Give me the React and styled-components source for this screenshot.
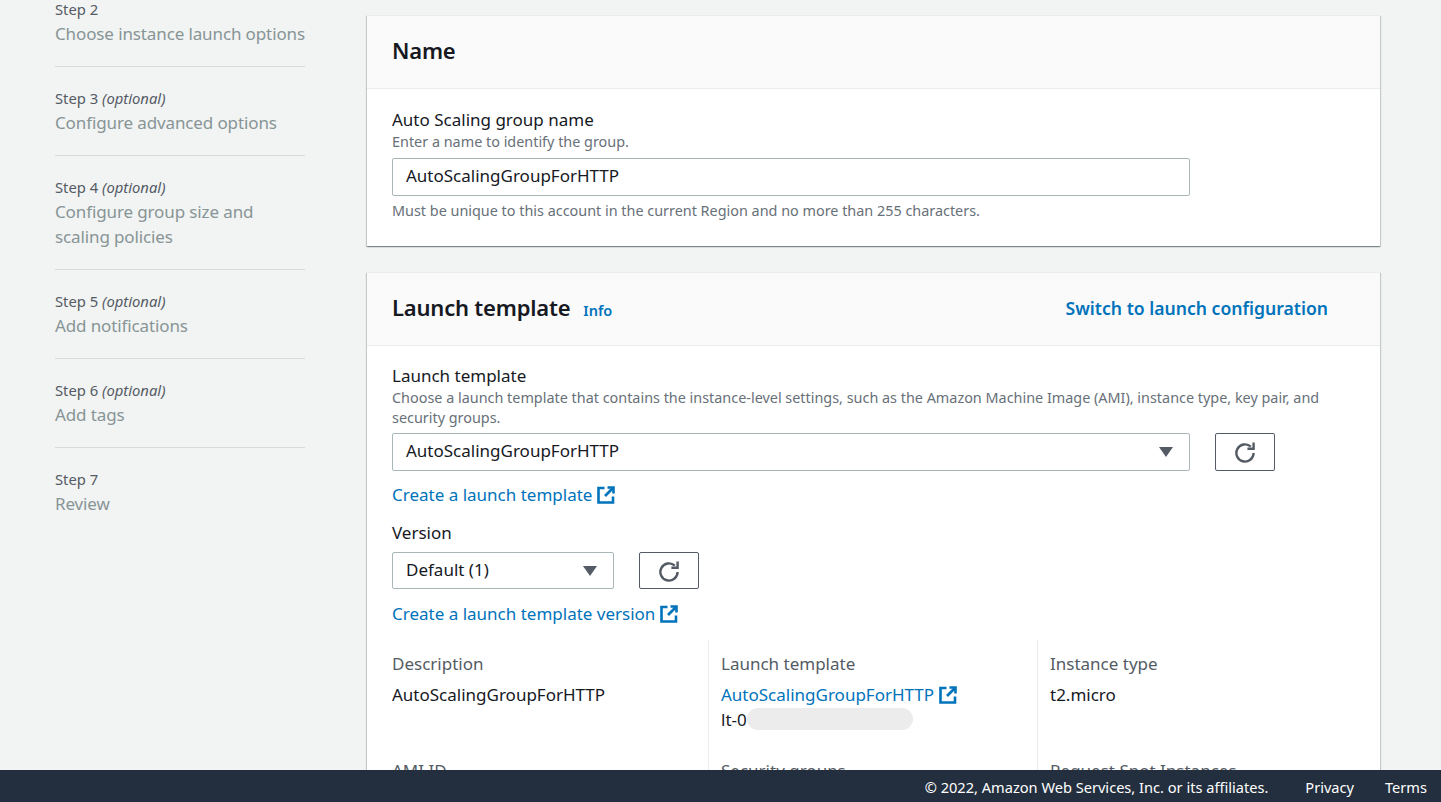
import React from 'react';
import styled, { createGlobalStyle } from 'styled-components';

const Global = createGlobalStyle`
  html, body { margin: 0; padding: 0; height: 100%; overflow: hidden; background: #f2f3f3; }
  body { font-family: "Noto Sans", "Open Sans", sans-serif; color: #16191f; }
  * { box-sizing: border-box; }
`;

const Page = styled.div`
  height: 802px;
  display: flex;
  flex-direction: column;
  overflow: hidden;
`;
const Main = styled.main`
  flex: 1;
  min-height: 0;
  overflow: hidden;
  display: grid;
  grid-template-columns: 250px 1013px;
  column-gap: 62px;
  padding-left: 55px;
  align-items: start;
`;
const Sidebar = styled.ol`
  list-style: none;
  margin: -1px 0 0;
  padding: 0;
`;
const Step = styled.li`
  padding: ${p => (p.$first ? '0' : '21px')} 0 19.5px;
  border-bottom: ${p => (p.$last ? 'none' : '1px solid #d5dbdb')};
`;
const StepLabel = styled.div`
  font-size: 14.8px;
  line-height: 20px;
  color: #545b64;
  em { font-style: italic; }
`;
const StepTitle = styled.div`
  margin-top: 3px;
  font-size: 17px;
  line-height: 24.5px;
  color: #879596;
  letter-spacing: -0.12px;
  white-space: nowrap;
`;
const Content = styled.div`
  padding-top: 15px;
  display: flex;
  flex-direction: column;
  gap: 26px;
`;
const Card = styled.section`
  background: #fff;
  border-top: 1px solid #eaeded;
  box-shadow: 0 1px 1px 0 rgba(0, 28, 36, 0.3), 1px 1px 1px 0 rgba(0, 28, 36, 0.15), -1px 1px 1px 0 rgba(0, 28, 36, 0.15);
`;
const CardHeader = styled.header`
  height: 73px;
  background: #fafafa;
  border-bottom: 1px solid #eaeded;
  padding: 0 52px 2px 25px;
  display: flex;
  align-items: center;
`;
const CardTitle = styled.h2`
  margin: 0 0 2px;
  font-size: 22px;
  line-height: 28px;
  font-weight: 600;
  letter-spacing: -0.2px;
  color: #16191f;
`;
const InfoLink = styled.a`
  margin-left: 13px;
  margin-top: 3px;
  font-size: 14.5px;
  font-weight: 600;
  color: #0073bb;
`;
const SwitchLink = styled.a`
  margin-left: auto;
  margin-top: -1px;
  font-size: 17.6px;
  font-weight: 600;
  color: #0073bb;
`;
const CardBody = styled.div`
  padding: ${p => (p.$flush ? '19px 25px 0' : '20px 25px 25px')};
`;
const Label = styled.div`
  font-size: 17px;
  line-height: 22px;
  color: #16191f;
  margin-top: ${p => p.$top || 0}px;
`;
const Description = styled.div`
  margin-top: 1px;
  font-size: 14.4px;
  line-height: 20px;
  color: #687078;
`;
const Hint = styled(Description)`
  margin-top: 5px;
`;
const TextInput = styled.input`
  display: block;
  width: 798px;
  height: 38px;
  margin-top: 6px;
  padding: 0 13px 3px;
  font: inherit;
  font-size: 17px;
  color: #16191f;
  background: #fff;
  border: 1px solid #aab7b8;
  border-radius: 2px;
  outline: none;
`;
const ControlRow = styled.div`
  display: flex;
  align-items: stretch;
  gap: 25px;
  margin-top: ${p => p.$top}px;
  height: ${p => p.$h}px;
`;
const SelectBox = styled.div`
  width: ${p => p.$w}px;
  display: flex;
  align-items: center;
  justify-content: space-between;
  padding: 0 16px 0 13px;
  font-size: 17px;
  color: #16191f;
  background: #fff;
  border: 1px solid #aab7b8;
  border-radius: 2px;
`;
const SelectValue = styled.span`
  margin-top: -3px;
`;
const Caret = styled.span`
  width: 0;
  height: 0;
  border-left: 7px solid transparent;
  border-right: 7px solid transparent;
  border-top: 10px solid #545b64;
`;
const RefreshButton = styled.button`
  width: 60px;
  padding: 0;
  display: flex;
  align-items: center;
  justify-content: center;
  background: #fff;
  border: 1px solid #545b64;
  border-radius: 2px;
`;
const ExternalLink = styled.a`
  display: flex;
  align-items: center;
  gap: 5px;
  margin-top: ${p => p.$top || 12}px;
  font-size: 17px;
  line-height: 24px;
  color: #0073bb;
`;
const DetailsGrid = styled.div`
  margin: 14px 0 0 -12px;
  display: grid;
  grid-template-columns: repeat(3, 329px);
`;
const DetailCol = styled.div`
  position: relative;
  padding: 13px 12px 0;
  min-height: 200px;
  border-right: ${p => (p.$last ? 'none' : '1px solid #eaeded')};
`;
const DetailLabel = styled.div`
  font-size: 17px;
  line-height: 22px;
  color: #545b64;
  margin-top: ${p => p.$top || 0}px;
`;
const DetailValue = styled.div`
  font-size: 17px;
  line-height: 22px;
  color: #16191f;
  margin-top: ${p => p.$top || 0}px;
`;
const DetailLink = styled(ExternalLink)`
  margin-top: 9px;
  line-height: 22px;
`;
const Redaction = styled.span`
  position: absolute;
  left: 38px;
  top: 68px;
  width: 166px;
  height: 22px;
  border-radius: 11px;
  background: #ececec;
`;
const Footer = styled.footer`
  height: 32px;
  flex: none;
  background: #232f3e;
  color: #fff;
  display: flex;
  align-items: center;
  justify-content: flex-end;
  padding: 2px 14px 0 0;
  font-size: 14.6px;
`;
const FooterItem = styled.span`
  margin-left: ${p => p.$gap || 0}px;
`;

const ExternalIcon = () => (
  <svg width="18" height="18" viewBox="0 0 18 18" fill="none" stroke="#0073bb" strokeWidth="2.6">
    <path d="M7.5 2H1.5v14.5H16V10.5" />
    <path d="M10.5 1.5H16.5V7.5" />
    <path d="M16 2L8 10" />
  </svg>
);

const RefreshIcon = () => (
  <svg width="22" height="22" viewBox="0 0 22 22" fill="none" stroke="#545b64" strokeWidth="2.4">
    <path d="M16.8 5.6A8.6 8.6 0 1 0 19.6 12" />
    <path d="M19.6 1.5V7.8H13.4" />
  </svg>
);

const steps = [
  { label: 'Step 2', title: 'Choose instance launch options' },
  { label: 'Step 3', opt: true, title: 'Configure advanced options' },
  { label: 'Step 4', opt: true, title: <>Configure group size and<br />scaling policies</> },
  { label: 'Step 5', opt: true, title: 'Add notifications' },
  { label: 'Step 6', opt: true, title: 'Add tags' },
  { label: 'Step 7', title: 'Review' },
];

export default function App() {
  return (
    <Page>
      <Global />
      <Main>
        <Sidebar>
          {steps.map((s, i) => (
            <Step key={s.label} $first={i === 0} $last={i === steps.length - 1}>
              <StepLabel>{s.label}{s.opt && <> <em>(optional)</em></>}</StepLabel>
              <StepTitle>{s.title}</StepTitle>
            </Step>
          ))}
        </Sidebar>
        <Content>
          <Card>
            <CardHeader><CardTitle>Name</CardTitle></CardHeader>
            <CardBody>
              <Label>Auto Scaling group name</Label>
              <Description>Enter a name to identify the group.</Description>
              <TextInput readOnly value="AutoScalingGroupForHTTP" />
              <Hint>Must be unique to this account in the current Region and no more than 255 characters.</Hint>
            </CardBody>
          </Card>
          <Card>
            <CardHeader>
              <CardTitle>Launch template</CardTitle>
              <InfoLink>Info</InfoLink>
              <SwitchLink>Switch to launch configuration</SwitchLink>
            </CardHeader>
            <CardBody $flush>
              <Label>Launch template</Label>
              <Description>
                Choose a launch template that contains the instance-level settings, such as the Amazon Machine Image (AMI), instance type, key pair, and<br />security groups.
              </Description>
              <ControlRow $top={5} $h={38}>
                <SelectBox $w={798}><SelectValue>AutoScalingGroupForHTTP</SelectValue><Caret /></SelectBox>
                <RefreshButton aria-label="Refresh"><RefreshIcon /></RefreshButton>
              </ControlRow>
              <ExternalLink>Create a launch template <ExternalIcon /></ExternalLink>
              <Label $top={15}>Version</Label>
              <ControlRow $top={8} $h={37}>
                <SelectBox $w={222}><SelectValue>Default (1)</SelectValue><Caret /></SelectBox>
                <RefreshButton aria-label="Refresh"><RefreshIcon /></RefreshButton>
              </ControlRow>
              <ExternalLink $top={13}>Create a launch template version <ExternalIcon /></ExternalLink>
              <DetailsGrid>
                <DetailCol>
                  <DetailLabel>Description</DetailLabel>
                  <DetailValue $top={9}>AutoScalingGroupForHTTP</DetailValue>
                  <DetailLabel $top={54}>AMI ID</DetailLabel>
                </DetailCol>
                <DetailCol>
                  <DetailLabel>Launch template</DetailLabel>
                  <DetailLink>AutoScalingGroupForHTTP <ExternalIcon /></DetailLink>
                  <DetailValue $top={3}>lt-0</DetailValue>
                  <Redaction />
                  <DetailLabel $top={29}>Security groups</DetailLabel>
                </DetailCol>
                <DetailCol $last>
                  <DetailLabel>Instance type</DetailLabel>
                  <DetailValue $top={9}>t2.micro</DetailValue>
                  <DetailLabel $top={54}>Request Spot Instances</DetailLabel>
                </DetailCol>
              </DetailsGrid>
            </CardBody>
          </Card>
        </Content>
      </Main>
      <Footer>
        <FooterItem>© 2022, Amazon Web Services, Inc. or its affiliates.</FooterItem>
        <FooterItem $gap={37}>Privacy</FooterItem>
        <FooterItem $gap={31}>Terms</FooterItem>
      </Footer>
    </Page>
  );
}
